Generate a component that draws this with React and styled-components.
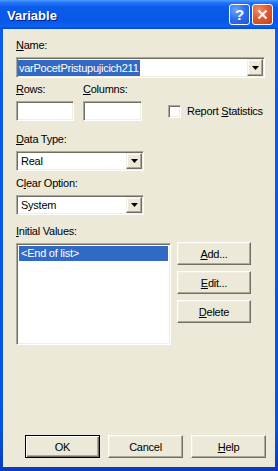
import React from "react";
import styled, { createGlobalStyle } from "styled-components";

const GlobalStyle = createGlobalStyle`
  html, body {
    margin: 0;
    padding: 0;
    background: #ece9d8;
  }
  body {
    font-family: "Liberation Sans", Arial, sans-serif;
    font-size: 11px;
    letter-spacing: -0.25px;
    color: #000;
  }
`;

const Window = styled.div`
  width: 278px;
  height: 471px;
  display: flex;
  flex-direction: column;
  background: #0055e5;
`;

const TitleBar = styled.div`
  height: 29px;
  flex: none;
  display: flex;
  align-items: center;
  gap: 2px;
  padding: 0 5px 0 7px;
  background: linear-gradient(
    180deg,
    #4a9cff 0%,
    #2272f7 10%,
    #0a5ceb 25%,
    #0858e8 75%,
    #0c62f2 90%,
    #0048d6 100%
  );
`;

const Title = styled.span`
  flex: 1;
  color: #fff;
  font: bold 13px "Liberation Sans", Arial, sans-serif;
  letter-spacing: 0;
  text-shadow: 1px 1px #0a1883;
  padding-top: 1px;
`;

const CaptionButton = styled.div`
  box-sizing: border-box;
  width: 21px;
  height: 21px;
  border: 1px solid #fff;
  border-radius: 3px;
  display: flex;
  align-items: center;
  justify-content: center;
  color: #fff;
  font: bold 15px "Liberation Sans", Arial, sans-serif;
  background: ${(p) =>
    p.$close
      ? "radial-gradient(circle at 30% 25%, #f08a6a 0%, #e25a32 45%, #c8401c 100%)"
      : "radial-gradient(circle at 30% 25%, #6aa4ff 0%, #2a6ef0 50%, #1a55d8 100%)"};
`;

const Frame = styled.div`
  flex: 1;
  display: flex;
  padding: 0 3px 4px 3px;
  background: linear-gradient(180deg, #0a5ceb 0%, #0055e5 90%, #0a3cbd 100%);
`;

const Client = styled.div`
  flex: 1;
  display: flex;
  flex-direction: column;
  background: #ece9d8;
  padding: 10px 0 9px 13px;
`;

const Label = styled.div`
  line-height: 13px;
  height: 13px;
  margin-top: ${(p) => p.$top || 0}px;
  margin-bottom: 5px;
  white-space: nowrap;
`;

const Sunken = styled.div`
  box-sizing: border-box;
  width: ${(p) => p.$w}px;
  height: ${(p) => p.$h}px;
  background: #fff;
  border: 1px solid;
  border-color: #aca899 #fff #fff #aca899;
  box-shadow: inset 1px 1px #716f64, inset -1px -1px #f1efe2;
`;

const Combo = styled(Sunken)`
  display: flex;
  align-items: stretch;
  padding: 1px;
`;

const ComboText = styled.div`
  flex: 1;
  display: flex;
  align-items: center;
  padding-left: ${(p) => p.$pad}px;
  white-space: nowrap;
`;

const Selected = styled.span`
  background: #316ac5;
  color: #fff;
  line-height: 16px;
  padding: 0 1px;
`;

const ArrowButton = styled.div`
  box-sizing: border-box;
  width: 16px;
  display: flex;
  align-items: center;
  justify-content: center;
  background: #ece9d8;
  border: 1px solid;
  border-color: #f1efe2 #716f64 #716f64 #f1efe2;
  box-shadow: inset -1px -1px #aca899, inset 1px 1px #fff;
`;

const FieldRow = styled.div`
  display: grid;
  grid-template-columns: 58px 59px auto;
  column-gap: 9px;
  align-items: end;
  margin-top: 5px;
`;

const CheckLine = styled.label`
  display: flex;
  align-items: center;
  gap: 6px;
  height: 20px;
  margin-left: 17px;
  white-space: nowrap;
`;

const CheckBox = styled(Sunken)`
  flex: none;
`;

const ListArea = styled.div`
  display: flex;
  align-items: flex-start;
  gap: 6px;
`;

const ListItem = styled.div`
  height: 15px;
  line-height: 15px;
  padding-left: 2px;
  background: ${(p) => (p.$selected ? "#316ac5" : "transparent")};
  color: ${(p) => (p.$selected ? "#fff" : "#000")};
`;

const SideButtons = styled.div`
  display: flex;
  flex-direction: column;
  gap: 6px;
  margin-top: -1px;
`;

const Button = styled.button`
  box-sizing: border-box;
  width: ${(p) => p.$w || 75}px;
  height: 23px;
  padding: 0;
  font: 11px "Liberation Sans", Arial, sans-serif;
  letter-spacing: -0.25px;
  color: #000;
  background: #ece9d8;
  border: 1px solid;
  border-color: ${(p) =>
    p.$default ? "#000" : "#fff #716f64 #716f64 #fff"};
  box-shadow: ${(p) =>
    p.$default
      ? "inset 1px 1px #fff, inset -1px -1px #716f64, inset -2px -2px #aca899"
      : "inset -1px -1px #aca899, inset 1px 1px #f1efe2"};
`;

const Footer = styled.div`
  margin-top: auto;
  display: flex;
  justify-content: flex-end;
  gap: 8px;
  padding-right: 9px;
`;

const DropArrow = () => (
  <svg width="7" height="4" viewBox="0 0 7 4">
    <path d="M0 0h7L3.5 4z" fill="#000" />
  </svg>
);

const CloseGlyph = () => (
  <svg width="11" height="11" viewBox="0 0 11 11">
    <path d="M1.5 1.5l8 8M9.5 1.5l-8 8" stroke="#fff" strokeWidth="2.2" />
  </svg>
);

const ComboBox = ({ w, h = 20, pad = 3, children }) => (
  <Combo $w={w} $h={h}>
    <ComboText $pad={pad}>{children}</ComboText>
    <ArrowButton>
      <DropArrow />
    </ArrowButton>
  </Combo>
);

const App = () => {
  return (
    <Window>
      <GlobalStyle />
      <TitleBar>
        <Title>Variable</Title>
        <CaptionButton>?</CaptionButton>
        <CaptionButton $close>
          <CloseGlyph />
        </CaptionButton>
      </TitleBar>
      <Frame>
        <Client>
          <Label>
            <u>N</u>ame:
          </Label>
          <ComboBox w={249} h={21} pad={0}>
            <Selected>varPocetPristupujicich211</Selected>
          </ComboBox>

          <FieldRow>
            <div>
              <Label>
                <u>R</u>ows:
              </Label>
              <Sunken $w={58} $h={20} />
            </div>
            <div>
              <Label>
                <u>C</u>olumns:
              </Label>
              <Sunken $w={59} $h={20} />
            </div>
            <CheckLine>
              <CheckBox $w={13} $h={13} />
              <span>
                Report <u>S</u>tatistics
              </span>
            </CheckLine>
          </FieldRow>

          <Label $top={12}>
            <u>D</u>ata Type:
          </Label>
          <ComboBox w={128}>Real</ComboBox>

          <Label $top={6}>
            C<u>l</u>ear Option:
          </Label>
          <ComboBox w={128}>System</ComboBox>

          <Label $top={10}>
            <u>I</u>nitial Values:
          </Label>
          <ListArea>
            <Sunken $w={155} $h={102} style={{ padding: 2 }}>
              <ListItem $selected>&lt;End of list&gt;</ListItem>
            </Sunken>
            <SideButtons>
              <Button $w={74}>
                <u>A</u>dd...
              </Button>
              <Button $w={74}>
                <u>E</u>dit...
              </Button>
              <Button $w={74}>
                <u>D</u>elete
              </Button>
            </SideButtons>
          </ListArea>

          <Footer>
            <Button $default>OK</Button>
            <Button>Cancel</Button>
            <Button>
              <u>H</u>elp
            </Button>
          </Footer>
        </Client>
      </Frame>
    </Window>
  );
};

export default App;
